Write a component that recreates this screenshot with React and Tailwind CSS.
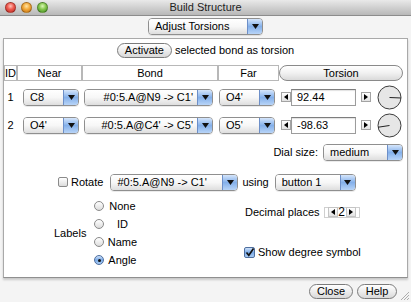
const lights = [
  "bg-[radial-gradient(circle_at_50%_35%,#ffc2b8_0%,#ee5a4f_45%,#b9261d_100%)]",
  "bg-[radial-gradient(circle_at_50%_35%,#ffe6a8_0%,#f3a93a_45%,#c06e0e_100%)]",
  "bg-[radial-gradient(circle_at_50%_35%,#dcf7b6_0%,#85c74e_45%,#3f8a1f_100%)]",
];

function Popup({ label, className = "", align = "left" }) {
  const alignCls =
    align === "right" ? "justify-end pr-[4px]" : align === "center" ? "justify-center" : "pl-[6px]";
  return (
    <div
      className={`flex h-[17px] shrink-0 overflow-hidden rounded-[4px] border border-[#8f8f8f] shadow-[0_1px_0_rgba(0,0,0,0.08)] ${className}`}
    >
      <div
        className={`flex min-w-0 flex-1 items-center whitespace-nowrap bg-linear-to-b from-white via-[#f7f7f7] to-[#dedede] ${alignCls}`}
      >
        {label}
      </div>
      <div className="flex w-[15px] items-center justify-center border-l border-[#6d8fc8] bg-linear-to-b from-[#d6e6fb] via-[#84b0ea] to-[#b8d4f7]">
        <svg width="7" height="5" viewBox="0 0 7 5">
          <path d="M0 0H7L3.5 5Z" fill="#111" />
        </svg>
      </div>
    </div>
  );
}

function PillButton({ children, className = "" }) {
  return (
    <div
      className={`flex h-[15px] items-center justify-center rounded-full border border-[#7b7b7b] bg-linear-to-b from-white via-[#ededed] to-[#d9d9d9] ${className}`}
    >
      {children}
    </div>
  );
}

function ArrowBtn({ dir, className = "" }) {
  return (
    <div
      className={`flex h-[10px] w-[10px] shrink-0 items-center justify-center border border-[#a3a3a3] bg-linear-to-b from-white to-[#e2e2e2] ${className}`}
    >
      <svg width="4" height="6" viewBox="0 0 4 6">
        <path d={dir === "left" ? "M4 0V6L0 3Z" : "M0 0V6L4 3Z"} fill="#000" />
      </svg>
    </div>
  );
}

function Dial({ angle }) {
  const a = ((angle - 90) * Math.PI) / 180;
  const x = 12.5 + 11.5 * Math.cos(a);
  const y = 12.5 + 11.5 * Math.sin(a);
  return (
    <svg width="25" height="25" viewBox="0 0 25 25" className="ml-[6px] shrink-0">
      <circle cx="12.5" cy="12.5" r="11.5" fill="#e6e6e6" stroke="#3c3c3c" />
      <line x1="12.5" y1="12.5" x2={x} y2={y} stroke="#222" />
    </svg>
  );
}

function TorsionRow({ id, near, bond, far, value }) {
  return (
    <div className="flex h-[28px] items-center">
      <div className="w-[13px] text-center">{id}</div>
      <Popup label={near} className="ml-[6px] w-[56px]" />
      <Popup label={bond} align="right" className="ml-[5px] w-[129px]" />
      <Popup label={far} className="ml-[6px] w-[56px]" />
      <ArrowBtn dir="left" className="ml-[6px]" />
      <div className="flex h-[17px] w-[65px] items-center border border-[#9c9c9c] border-t-[#7d7d7d] bg-white pl-[5px] shadow-[inset_0_1px_1px_rgba(0,0,0,0.12)]">
        {value}
      </div>
      <ArrowBtn dir="right" className="ml-[5px]" />
      <Dial angle={parseFloat(value)} />
    </div>
  );
}

function Radio({ label, checked }) {
  return (
    <div className="flex h-[18px] items-center">
      <div
        className={`flex h-[10px] w-[10px] items-center justify-center rounded-full border ${
          checked
            ? "border-[#4f6f9f] bg-linear-to-b from-[#cfe2fa] via-[#79a9e6] to-[#a9cbf4]"
            : "border-[#8a8a8a] bg-linear-to-b from-white to-[#dcdcdc]"
        }`}
      >
        {checked && <div className="h-[3px] w-[3px] rounded-full bg-[#111]" />}
      </div>
      <div className="ml-[3px] w-[30px] text-center">{label}</div>
    </div>
  );
}

const headCell = "flex h-[16px] items-center justify-center border border-[#b8b8b8] bg-white";

export default function App() {
  return (
    <div className="flex h-[302px] w-[411px] flex-col overflow-hidden bg-[#f4f4f4] font-['Liberation_Sans',Arial,sans-serif] text-[11px] leading-none text-black">
      <div className="grid h-[16px] shrink-0 grid-cols-[1fr_auto_1fr] items-center border-b border-[#8c8c8c] bg-linear-to-b from-[#e9e9e9] to-[#b8b8b8]">
        <div className="flex gap-[5px] pl-[5px]">
          {lights.map((c) => (
            <div key={c} className={`h-[11px] w-[11px] rounded-full border border-[#00000040] ${c}`} />
          ))}
        </div>
        <div className="text-[#222]">Build Structure</div>
        <div />
      </div>

      <div className="flex justify-center pt-[2px]">
        <Popup label="Adjust Torsions" className="w-[115px]" />
      </div>

      <div className="mx-[3px] mt-[3px] flex h-[240px] flex-col border border-[#a9a9a9] border-b-[#8f8f8f] bg-white shadow-[0_2px_2px_rgba(0,0,0,0.18)]">
        <div className="flex items-center justify-center pt-[4px]">
          <PillButton className="w-[55px]">Activate</PillButton>
          <span className="ml-[3px]">selected bond as torsion</span>
        </div>

        <div className="mt-[7px] flex">
          <div className={`${headCell} w-[13px]`}>ID</div>
          <div className={`${headCell} w-[65px]`}>Near</div>
          <div className={`${headCell} w-[136px]`}>Bond</div>
          <div className={`${headCell} w-[61px]`}>Far</div>
          <div className="flex h-[16px] w-[124px] items-center justify-center rounded-full border border-[#8a8a8a] bg-linear-to-b from-white via-[#f1f1f1] to-[#dadada]">
            Torsion
          </div>
        </div>

        <div className="mt-[2px]">
          <TorsionRow id="1" near="C8" bond="#0:5.A@N9 -> C1'" far="O4'" value="92.44" />
          <TorsionRow id="2" near="O4'" bond="#0:5.A@C4' -> C5'" far="O5'" value="-98.63" />
        </div>

        <div className="mt-[5px] flex items-center justify-end pr-[4px]">
          <span>Dial size:</span>
          <Popup label="medium" className="ml-[5px] w-[80px]" />
        </div>

        <div className="mt-[12px] flex h-[18px] items-center pl-[54px]">
          <div className="h-[10px] w-[10px] rounded-[2px] border border-[#8a8a8a] bg-linear-to-b from-white to-[#dcdcdc]" />
          <span className="ml-[3px]">Rotate</span>
          <Popup label="#0:5.A@N9 -> C1'" className="ml-[7px] w-[128px]" />
          <span className="ml-[4px]">using</span>
          <Popup label="button 1" className="ml-[6px] w-[81px]" />
        </div>

        <div className="mt-[6px] grid grid-cols-[240px_1fr]">
          <div className="flex items-center pl-[50px]">
            <span>Labels</span>
            <div className="ml-[8px] flex flex-col">
              <Radio label="None" />
              <Radio label="ID" />
              <Radio label="Name" />
              <Radio label="Angle" checked />
            </div>
          </div>
          <div className="flex flex-col">
            <div className="mt-[9px] flex h-[12px] items-center pl-[1px]">
              <span>Decimal places</span>
              <div className="ml-[4px] flex h-[11px] w-[36px] items-center justify-between border border-[#cfcfcf] px-[3px]">
                <ArrowBtn dir="left" className="h-[8px] w-[8px] border-[#c4c4c4]" />
                <span className="text-[12px]">2</span>
                <ArrowBtn dir="right" className="h-[8px] w-[8px] border-[#c4c4c4]" />
              </div>
            </div>
            <div className="mt-[28px] flex h-[12px] items-center">
              <div className="flex h-[11px] w-[11px] items-center justify-center rounded-[2px] border border-[#4f6f9f] bg-linear-to-b from-[#cfe2fa] via-[#79a9e6] to-[#a9cbf4]">
                <svg width="9" height="9" viewBox="0 0 9 9">
                  <path d="M1.5 4.5L3.8 7.3L8.5 0.5" fill="none" stroke="#111" strokeWidth="1.6" />
                </svg>
              </div>
              <span className="ml-[3px]">Show degree symbol</span>
            </div>
          </div>
        </div>
      </div>

      <div className="mt-[6px] flex items-start justify-end pr-[2px]">
        <PillButton className="w-[44px]">Close</PillButton>
        <PillButton className="ml-[4px] w-[40px]">Help</PillButton>
        <svg width="9" height="9" viewBox="0 0 9 9" className="ml-[3px] mt-[7px]">
          <path d="M9 1L1 9M9 4L4 9M9 7L7 9" stroke="#9a9a9a" strokeWidth="0.8" />
        </svg>
      </div>
    </div>
  );
}
